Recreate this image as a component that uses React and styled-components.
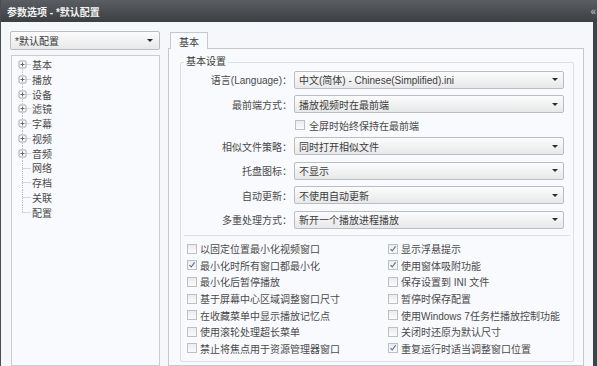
import React from "react";
import styled, { createGlobalStyle } from "styled-components";

const GlobalStyle = createGlobalStyle`
  html, body { margin: 0; padding: 0; }
  body {
    width: 597px;
    height: 366px;
    overflow: hidden;
    background: #f6f7fb;
    font-family: "Liberation Sans", "Noto Sans CJK SC", sans-serif;
    font-size: 10px;
    color: #444;
  }
`;

const Window = styled.div`
  width: 597px;
  height: 366px;
  display: flex;
  flex-direction: column;
  box-sizing: border-box;
  border-left: 1px solid #4a4d50;
  overflow: hidden;
`;

const TitleBar = styled.div`
  height: 22px;
  flex: none;
  display: flex;
  align-items: center;
  justify-content: space-between;
  padding-left: 6px;
  background: linear-gradient(#5a5e62, #3c3f42);
  color: #f4f4f4;
  font-weight: bold;
  font-size: 10px;
`;

const Collapse = styled.span`
  color: #a9acb0;
  font-size: 10px;
  padding-right: 1px;
`;

const Body = styled.div`
  flex: 1;
  min-height: 0;
  display: flex;
  padding: 9px 0 0 9px;
  background: #f6f7fb;
  border-right: 4px solid #404346;
`;

const Sidebar = styled.div`
  width: 150px;
  display: flex;
  flex-direction: column;
  gap: 5px;
`;

const Combo = styled.div`
  height: ${(p) => p.$h || 18}px;
  box-sizing: border-box;
  border: 1px solid #babdc1;
  border-radius: 2px;
  background: linear-gradient(#fcfcfc, #e7e8e9);
  display: flex;
  align-items: center;
  justify-content: space-between;
  padding: 0 ${(p) => p.$pr || 5}px 0 4px;
  color: #3c3c3c;
  white-space: nowrap;
`;

const Arrow = styled.span`
  width: 0;
  height: 0;
  border-left: 3px solid transparent;
  border-right: 3px solid transparent;
  border-top: 3px solid #2a2a2a;
`;

const TreePanel = styled.div`
  flex: 1;
  margin-left: 1px;
  border: 1px solid #c9ccd1;
  background: #f9fafd;
  padding-top: 1px;
`;

const TreeRow = styled.div`
  height: 14.8px;
  display: flex;
  align-items: center;
  color: #4a4a4a;
`;

const Main = styled.div`
  width: 416px;
  margin-left: 8px;
  padding-top: 1px;
  display: flex;
  flex-direction: column;
`;

const TabRow = styled.div`
  display: flex;
  padding-left: 2px;
`;

const Tab = styled.div`
  width: 38px;
  height: 17px;
  box-sizing: border-box;
  border: 1px solid #c5c8cc;
  border-bottom: none;
  background: #f9fafd;
  margin-bottom: -1px;
  position: relative;
  z-index: 1;
  display: flex;
  align-items: center;
  justify-content: center;
  color: #3c3c3c;
`;

const Panel = styled.div`
  flex: 1;
  border: 1px solid #c5c8cc;
  background: #f9fafd;
  padding: 6px 9px 0 11px;
`;

const Group = styled.fieldset`
  margin: 0;
  padding: 0;
  border: 1px solid #dde0e5;
  border-radius: 2px;
  min-width: 0;
`;

const Legend = styled.legend`
  margin-left: 3px;
  padding: 0 2px;
  line-height: 14px;
  color: #3c3c3c;
`;

const Form = styled.div`
  display: grid;
  grid-template-columns: 111px 270px;
  column-gap: 2px;
  row-gap: 6.5px;
  padding-top: 1.5px;
`;

const Label = styled.div`
  height: 18px;
  display: flex;
  align-items: center;
  justify-content: flex-end;
  white-space: nowrap;
  color: #4a4a4a;
`;

const CheckRow = styled.div`
  grid-column: 2;
  height: 11px;
  display: flex;
  align-items: center;
  gap: 4px;
  padding-left: 1px;
  white-space: nowrap;
  color: #4a4a4a;
`;

const Divider = styled.div`
  margin: 6px 3px 0;
  border-top: 1px solid #dde0e5;
`;

const Checks = styled.div`
  display: grid;
  grid-template-columns: 201px 1fr;
  grid-template-rows: repeat(7, 16.6px);
  grid-auto-flow: column;
  padding: 5px 0 4px 6px;
`;

const CheckItem = styled.label`
  display: flex;
  align-items: center;
  gap: 3px;
  white-space: nowrap;
  color: #4a4a4a;
`;

const Box = styled.span`
  width: 10px;
  height: 10px;
  box-sizing: border-box;
  border: 1px solid #bcbfc3;
  background: linear-gradient(#ececec, #fbfbfb);
  display: inline-flex;
  align-items: center;
  justify-content: center;
  flex: none;
`;

function Checkbox({ checked }) {
  return (
    <Box>
      {checked && (
        <svg width="8" height="8" viewBox="0 0 8 8">
          <polyline points="1.5,4.2 3.2,6 6.6,1.4" fill="none" stroke="#5a6994" strokeWidth="1.1" />
        </svg>
      )}
    </Box>
  );
}

function Connector({ plus, first, last }) {
  const y1 = first ? 7.4 : 0;
  const y2 = last ? 7.4 : 14.8;
  return (
    <svg width="20" height="14.8" style={{ flex: "none" }}>
      <line x1="10.5" y1={y1} x2="10.5" y2={y2} stroke="#b4b7bb" strokeDasharray="1 1" />
      <line x1="10.5" y1="7.5" x2="19" y2="7.5" stroke="#b4b7bb" strokeDasharray="1 1" />
      {plus && (
        <g>
          <rect x="7" y="4" width="7" height="7" rx="1" fill="#fafafa" stroke="#a4a7ab" />
          <line x1="8.5" y1="7.5" x2="12.5" y2="7.5" stroke="#666" />
          <line x1="10.5" y1="5.5" x2="10.5" y2="9.5" stroke="#666" />
        </g>
      )}
    </svg>
  );
}

const tree = [
  ["基本", true], ["播放", true], ["设备", true], ["滤镜", true], ["字幕", true],
  ["视频", true], ["音频", true], ["网络", false], ["存档", false], ["关联", false], ["配置", false],
];

const options = [
  ["以固定位置最小化视频窗口", false],
  ["最小化时所有窗口都最小化", true],
  ["最小化后暂停播放", false],
  ["基于屏幕中心区域调整窗口尺寸", false],
  ["在收藏菜单中显示播放记忆点", false],
  ["使用滚轮处理超长菜单", false],
  ["禁止将焦点用于资源管理器窗口", false],
  ["显示浮悬提示", true],
  ["使用窗体吸附功能", true],
  ["保存设置到 INI 文件", false],
  ["暂停时保存配置", false],
  ["使用Windows 7任务栏播放控制功能", false],
  ["关闭时还原为默认尺寸", false],
  ["重复运行时适当调整窗口位置", true],
];

function Field({ label, value }) {
  return (
    <>
      <Label>{label}：</Label>
      <Combo>
        <span>{value}</span>
        <Arrow />
      </Combo>
    </>
  );
}

export default function App() {
  return (
    <Window>
      <GlobalStyle />
      <TitleBar>
        <span>参数选项 - *默认配置</span>
        <Collapse>«</Collapse>
      </TitleBar>
      <Body>
        <Sidebar>
          <Combo $h={19} $pr={6}>
            <span>*默认配置</span>
            <Arrow />
          </Combo>
          <TreePanel>
            {tree.map(([name, plus], i) => (
              <TreeRow key={name}>
                <Connector plus={plus} first={i === 0} last={i === tree.length - 1} />
                {name}
              </TreeRow>
            ))}
          </TreePanel>
        </Sidebar>
        <Main>
          <TabRow>
            <Tab>基本</Tab>
          </TabRow>
          <Panel>
            <Group>
              <Legend>基本设置</Legend>
              <Form>
                <Field label="语言(Language)" value="中文(简体) - Chinese(Simplified).ini" />
                <Field label="最前端方式" value="播放视频时在最前端" />
                <CheckRow>
                  <Checkbox />
                  全屏时始终保持在最前端
                </CheckRow>
                <Field label="相似文件策略" value="同时打开相似文件" />
                <Field label="托盘图标" value="不显示" />
                <Field label="自动更新" value="不使用自动更新" />
                <Field label="多重处理方式" value="新开一个播放进程播放" />
              </Form>
              <Divider />
              <Checks>
                {options.map(([text, checked]) => (
                  <CheckItem key={text}>
                    <Checkbox checked={checked} />
                    {text}
                  </CheckItem>
                ))}
              </Checks>
            </Group>
          </Panel>
        </Main>
      </Body>
    </Window>
  );
}
